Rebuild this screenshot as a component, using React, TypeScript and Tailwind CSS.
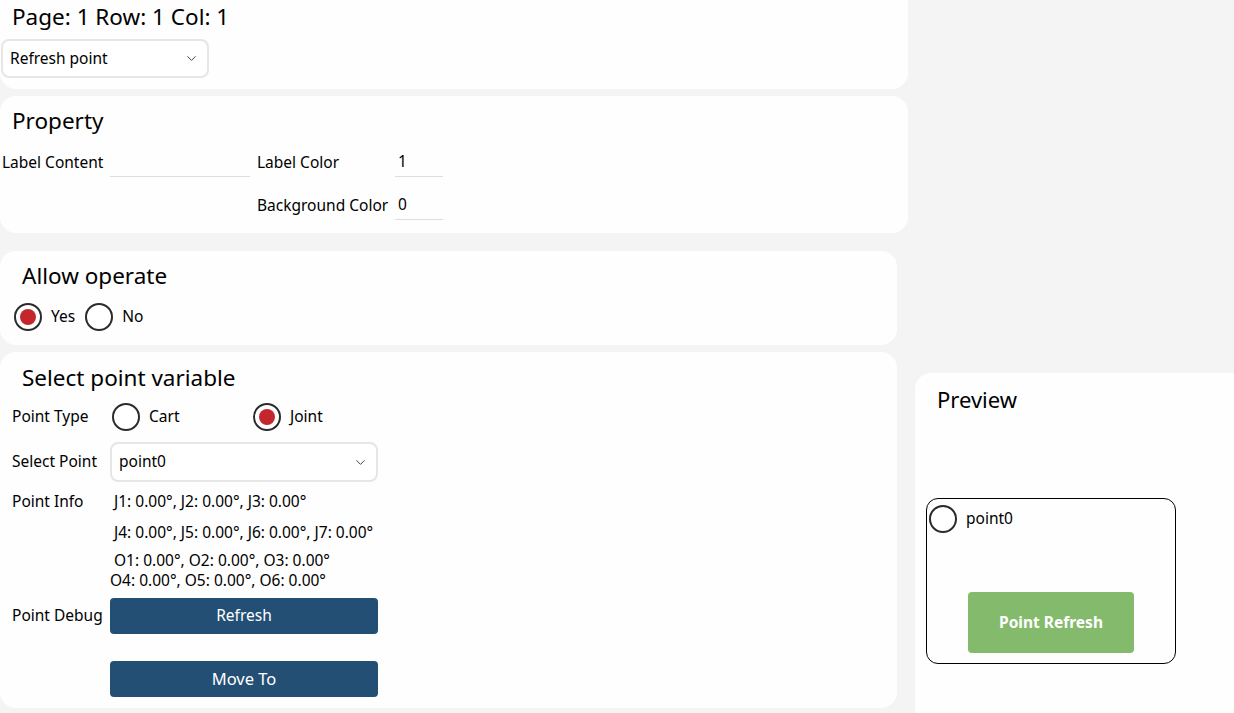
import { ChevronDown } from "lucide-react";

function Radio({ checked }: { checked?: boolean }) {
  return (
    <span className="flex h-[28px] w-[28px] shrink-0 items-center justify-center rounded-full border-2 border-[#2b2b2b] bg-white">
      {checked && <span className="h-[16px] w-[16px] rounded-full bg-[#c4262e]" />}
    </span>
  );
}

function Select({ value, className }: { value: string; className: string }) {
  return (
    <div
      className={`flex items-center justify-between rounded-lg border-2 border-[#e6e6e6] bg-white pl-[7px] pr-[8px] text-[15.5px] ${className}`}
    >
      <span>{value}</span>
      <ChevronDown size={15} strokeWidth={1.6} className="text-[#444]" />
    </div>
  );
}

function Underline({ value, className }: { value?: string; className: string }) {
  return (
    <div className={`flex h-[30px] items-center border-b border-[#dedede] pl-[3px] text-[15.5px] ${className}`}>
      {value}
    </div>
  );
}

export default function App() {
  return (
    <div
      className="flex h-[713px] w-[1234px] overflow-hidden bg-[#f4f4f4] text-black"
      style={{ fontFamily: '"Noto Sans", "Open Sans", sans-serif' }}
    >
      <div className="flex w-[908px] shrink-0 flex-col">
        {/* page / row / col */}
        <div className="h-[89px] rounded-b-2xl bg-[#fefefe] pt-[3px]">
          <div className="pl-[12px] text-[22.5px] leading-[28px]">Page: 1 Row: 1 Col: 1</div>
          <Select value="Refresh point" className="ml-[1px] mt-[8px] h-[39px] w-[208px]" />
        </div>

        {/* property */}
        <div className="mt-[7px] h-[137px] rounded-2xl bg-[#fefefe] pt-[10px]">
          <div className="pl-[12px] text-[22.5px] leading-[30px]">Property</div>
          <div className="mt-[11px] flex items-start">
            <div className="flex items-end">
              <span className="w-[110px] pb-[5px] pl-[2px] text-[15.5px] leading-[20px]">Label Content</span>
              <Underline className="w-[140px]" />
            </div>
            <div className="ml-[7px] flex flex-col gap-[13px]">
              <div className="flex items-end">
                <span className="w-[138px] pb-[5px] text-[15.5px] leading-[20px]">Label Color</span>
                <Underline value="1" className="w-[48px]" />
              </div>
              <div className="flex items-end">
                <span className="w-[138px] pb-[5px] text-[15.5px] leading-[20px]">Background Color</span>
                <Underline value="0" className="w-[48px]" />
              </div>
            </div>
          </div>
        </div>

        {/* allow operate */}
        <div className="mt-[18px] h-[94px] w-[897px] rounded-2xl bg-[#fefefe] pt-[10px]">
          <div className="pl-[22px] text-[22.5px] leading-[30px]">Allow operate</div>
          <div className="mt-[12px] flex items-center pl-[14px] text-[15.5px]">
            <Radio checked />
            <span className="ml-[9px]">Yes</span>
            <span className="ml-[10px]">
              <Radio />
            </span>
            <span className="ml-[9px]">No</span>
          </div>
        </div>

        {/* select point variable */}
        <div className="mt-[7px] h-[356px] w-[897px] rounded-2xl bg-[#fefefe] pt-[11px] text-[15.5px]">
          <div className="pl-[22px] text-[22.5px] leading-[30px]">Select point variable</div>
          <div className="mt-[10px] flex items-center pl-[12px]">
            <span className="w-[100px]">Point Type</span>
            <Radio />
            <span className="ml-[9px] w-[104px]">Cart</span>
            <Radio checked />
            <span className="ml-[9px]">Joint</span>
          </div>
          <div className="mt-[11px] flex items-center pl-[12px]">
            <span className="w-[98px]">Select Point</span>
            <Select value="point0" className="h-[40px] w-[268px]" />
          </div>
          <div className="mt-[8px] flex pl-[12px] leading-[22px]">
            <span className="w-[98px]">Point Info</span>
            <div className="flex flex-col">
              <span className="pl-[4px]">J1: 0.00°, J2: 0.00°, J3: 0.00°</span>
              <span className="mt-[9px] pl-[4px]">J4: 0.00°, J5: 0.00°, J6: 0.00°, J7: 0.00°</span>
              <span className="mt-[7px] pl-[4px] leading-[20px]">O1: 0.00°, O2: 0.00°, O3: 0.00°</span>
              <span className="leading-[20px]">O4: 0.00°, O5: 0.00°, O6: 0.00°</span>
            </div>
          </div>
          <div className="mt-[8px] flex items-center pl-[12px]">
            <span className="w-[98px]">Point Debug</span>
            <button className="h-[36px] w-[268px] rounded bg-[#244f74] text-[15.5px] text-white">Refresh</button>
          </div>
          <div className="mt-[27px] flex pl-[110px]">
            <button className="h-[36px] w-[268px] rounded bg-[#244f74] text-[16.5px] text-white">Move To</button>
          </div>
        </div>
      </div>

      {/* preview */}
      <div className="flex flex-1 flex-col pl-[7px] pt-[373px]">
        <div className="flex-1 rounded-tl-2xl bg-[#fefefe] pt-[11px]">
          <div className="pl-[22px] text-[22px] leading-[30px]">Preview</div>
          <div className="ml-[11px] mt-[84px] flex h-[166px] w-[250px] flex-col rounded-xl border border-black pt-[6px]">
            <div className="flex items-center pl-[2px]">
              <Radio />
              <span className="ml-[9px] text-[15.5px]">point0</span>
            </div>
            <button className="ml-[41px] mt-[59px] h-[61px] w-[166px] rounded bg-[#84ba6c] text-[15.5px] font-bold text-white">
              Point Refresh
            </button>
          </div>
        </div>
      </div>
    </div>
  );
}
